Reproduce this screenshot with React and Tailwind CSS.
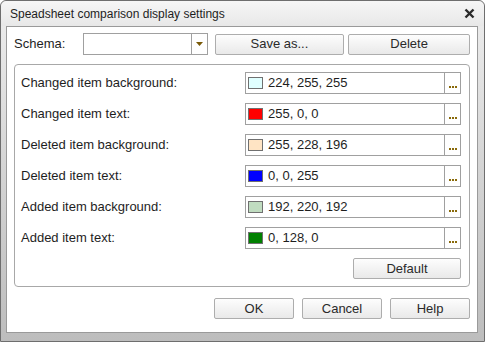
const rows = [
  { label: "Changed item background:", color: "#e0ffff", value: "224, 255, 255" },
  { label: "Changed item text:", color: "#ff0000", value: "255, 0, 0" },
  { label: "Deleted item background:", color: "#ffe4c4", value: "255, 228, 196" },
  { label: "Deleted item text:", color: "#0000ff", value: "0, 0, 255" },
  { label: "Added item background:", color: "#c0dcc0", value: "192, 220, 192" },
  { label: "Added item text:", color: "#008000", value: "0, 128, 0" },
];

function Btn({ className = "", children }) {
  return (
    <button
      className={
        "flex h-[21px] items-center justify-center rounded-[2px] border border-[#adadad] bg-gradient-to-b from-[#fdfdfd] to-[#e9e9e9] text-[13px] text-[#2a2a2a] " +
        className
      }
    >
      {children}
    </button>
  );
}

function Dots() {
  return (
    <div className="flex h-full w-[16px] items-end justify-center border-l border-[#a0a0a0] pb-[5px]">
      <div className="flex gap-[1px]">
        <span className="h-[2px] w-[2px] bg-[#8a6a0a]" />
        <span className="h-[2px] w-[2px] bg-[#8a6a0a]" />
        <span className="h-[2px] w-[2px] bg-[#8a6a0a]" />
      </div>
    </div>
  );
}

export default function App() {
  return (
    <div
      className="flex h-[342px] w-[485px] flex-col rounded-t-[6px] border border-[#6e6e6e] bg-gradient-to-b from-[#eeeeee] via-[#d4d4d4] to-[#bdbdbd] text-[#1e1e1e]"
      style={{ fontFamily: '"Liberation Sans", Arial, sans-serif' }}
    >
      <div className="flex h-[25px] items-center justify-between rounded-t-[6px] bg-gradient-to-b from-[#f6f6f6] to-[#e8e8e8] pl-[9px] pr-[9px]">
        <span className="text-[12px]">Speadsheet comparison display settings</span>
        <svg width="11" height="11" viewBox="0 0 11 11">
          <path d="M1.5 1.5 L9.5 9.5 M9.5 1.5 L1.5 9.5" stroke="#2a2a2a" strokeWidth="2.4" />
        </svg>
      </div>
      <div className="mb-[8px] ml-[5px] mr-[6px] flex flex-1 flex-col border border-[#9a9a9a] bg-white px-[7px] pt-[6px]">
        <div className="flex h-[22px] items-center">
          <span className="w-[69px] text-[13px]">Schema:</span>
          <div className="flex h-[22px] w-[125px] border border-[#a0a0a0] bg-white">
            <div className="flex-1" />
            <div className="flex w-[16px] items-center justify-center border-l border-[#a0a0a0]">
              <svg width="7" height="4" viewBox="0 0 7 4">
                <path d="M0 0 H7 L3.5 4 Z" fill="#7a5a08" />
              </svg>
            </div>
          </div>
          <Btn className="ml-[7px] w-[130px]">Save as...</Btn>
          <Btn className="ml-[4px] w-[122px]">Delete</Btn>
        </div>
        <div className="mt-[9px] flex flex-col gap-[9px] rounded-[4px] border border-[#a8a8a8] pb-[7px] pl-[6px] pr-[8px] pt-[7px]">
          {rows.map((r) => (
            <div key={r.label} className="flex h-[22px] items-center">
              <span className="w-[224px] text-[13px]">{r.label}</span>
              <div className="flex h-[22px] flex-1 items-center border border-[#a0a0a0]">
                <span
                  className="ml-[2px] h-[12px] w-[15px] border border-[#707070]"
                  style={{ backgroundColor: r.color }}
                />
                <span className="ml-[5px] flex-1 text-[13px]">{r.value}</span>
                <Dots />
              </div>
            </div>
          ))}
          <div className="flex justify-end">
            <Btn className="w-[108px]">Default</Btn>
          </div>
        </div>
        <div className="mt-[11px] flex justify-end gap-[8px]">
          <Btn className="w-[80px]">OK</Btn>
          <Btn className="w-[80px]">Cancel</Btn>
          <Btn className="w-[80px]">Help</Btn>
        </div>
      </div>
    </div>
  );
}
